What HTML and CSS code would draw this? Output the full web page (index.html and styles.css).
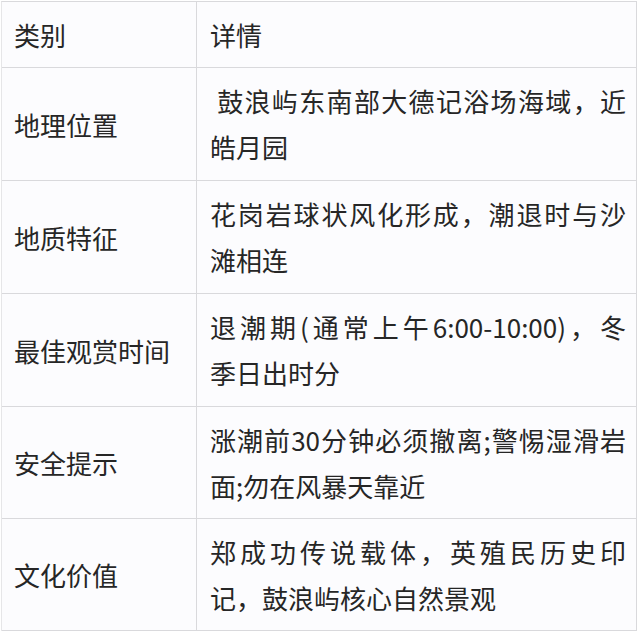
FILE: index.html
```html
<!DOCTYPE html>
<html lang="zh-CN">
<head>
<meta charset="utf-8">
<title>鼓浪屿</title>
<link rel="stylesheet" href="styles.css">
</head>
<body>
<div class="sheet">
  <div class="row head">
    <div class="cell key">类别</div>
    <div class="cell val">详情</div>
  </div>
  <div class="row">
    <div class="cell key">地理位置</div>
    <div class="cell val"><span class="line full">&nbsp;鼓浪屿东南部大德记浴场海域，近</span><span class="line">皓月园</span></div>
  </div>
  <div class="row">
    <div class="cell key">地质特征</div>
    <div class="cell val"><span class="line full">花岗岩球状风化形成，潮退时与沙</span><span class="line">滩相连</span></div>
  </div>
  <div class="row">
    <div class="cell key">最佳观赏时间</div>
    <div class="cell val"><span class="line full">退潮期(通常上午6:00-10:00)，冬</span><span class="line">季日出时分</span></div>
  </div>
  <div class="row short">
    <div class="cell key">安全提示</div>
    <div class="cell val"><span class="line full">涨潮前30分钟必须撤离;警惕湿滑岩</span><span class="line">面;勿在风暴天靠近</span></div>
  </div>
  <div class="row short">
    <div class="cell key">文化价值</div>
    <div class="cell val"><span class="line full">郑成功传说载体，英殖民历史印</span><span class="line">记，鼓浪屿核心自然景观</span></div>
  </div>
</div>
</body>
</html>
```
FILE: styles.css
```css
html, body {
  margin: 0;
  padding: 0;
  background: #ffffff;
}
body {
  font-family: "Noto Sans CJK SC", "Noto Sans", sans-serif;
  font-size: 26px;
  color: #262626;
}
.sheet {
  margin: 1px 0 0 1px;
  width: 634px;
  border-top: 1px solid #d9d9dc;
  border-left: 1px solid #e6e6e8;
  border-right: 1px solid #d9d9dc;
  background: #fcfcfe;
}
.row {
  display: grid;
  grid-template-columns: 195px 1fr;
  height: 112px;
  border-bottom: 1px solid #d9d9dc;
}
.row.head {
  height: 65px;
}
.row.short {
  height: 111px;
}
.cell {
  display: flex;
  flex-direction: column;
  justify-content: center;
}
.key {
  padding-left: 12px;
  border-right: 1px solid #d9d9dc;
}
.val {
  padding-left: 13px;
  padding-right: 10px;
}
.line {
  display: block;
  line-height: 46px;
  white-space: nowrap;
}
.line.full {
  white-space: normal;
  text-align: justify;
  text-align-last: justify;
}
```
